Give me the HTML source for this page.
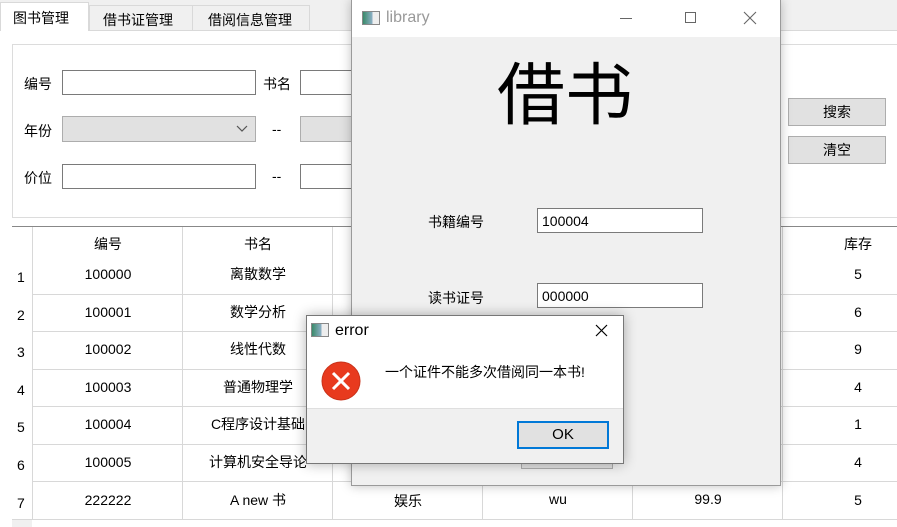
<!DOCTYPE html>
<html><head><meta charset="utf-8"><style>
*{margin:0;padding:0;box-sizing:border-box}
body{width:897px;height:527px;overflow:hidden;background:#fff;font-family:"Liberation Sans","Microsoft YaHei","Noto Sans CJK SC",sans-serif;font-size:14px;color:#000;position:relative}
.a{position:absolute}
.t{white-space:nowrap}
.inp{position:absolute;background:#fff;border:1px solid #7a7a7a}
.btn{position:absolute;background:#e1e1e1;border:1px solid #adadad;text-align:center}
.vl{position:absolute;width:1px;background:#d8d8d8}
.hl{position:absolute;height:1px;background:#d8d8d8}
.c{position:absolute;text-align:center;width:150px;white-space:nowrap}
</style></head><body>
<div class="a" style="left:0;top:0;width:897px;height:31px;background:#f0f0f0"></div>
<div class="a" style="left:0;top:2px;width:89px;height:29px;background:#fff;border:1px solid #d9d9d9;border-bottom:none"></div>
<div class="a t" style="left:13px;top:8px;font-size:14px">图书管理</div>
<div class="a" style="left:89px;top:5px;width:104px;height:26px;background:#f0f0f0;border:1px solid #d9d9d9;border-bottom:none"></div>
<div class="a t" style="left:103px;top:10px">借书证管理</div>
<div class="a" style="left:192px;top:5px;width:118px;height:26px;background:#f0f0f0;border:1px solid #d9d9d9;border-bottom:none"></div>
<div class="a t" style="left:208px;top:10px">借阅信息管理</div>
<div class="a" style="left:89px;top:30px;width:808px;height:1px;background:#d9d9d9"></div>
<div class="a" style="left:12px;top:44px;width:900px;height:174px;border:1px solid #dcdcdc"></div>
<div class="a t" style="left:24px;top:74px">编号</div>
<div class="inp" style="left:62px;top:70px;width:194px;height:25px"></div>
<div class="a t" style="left:263px;top:74px">书名</div>
<div class="inp" style="left:300px;top:70px;width:60px;height:25px"></div>
<div class="a t" style="left:24px;top:121px">年份</div>
<div class="a" style="left:62px;top:116px;width:194px;height:26px;background:#e1e1e1;border:1px solid #adadad"></div>
<svg class="a" style="left:236px;top:125px" width="12" height="8"><path d="M1 1L6 6L11 1" fill="none" stroke="#555" stroke-width="1.2"/></svg>
<div class="a t" style="left:272px;top:121px">--</div>
<div class="a" style="left:300px;top:116px;width:60px;height:26px;background:#e1e1e1;border:1px solid #adadad"></div>
<div class="a t" style="left:24px;top:168px">价位</div>
<div class="inp" style="left:62px;top:164px;width:194px;height:25px"></div>
<div class="a t" style="left:272px;top:168px">--</div>
<div class="inp" style="left:300px;top:164px;width:60px;height:25px"></div>
<div class="btn" style="left:788px;top:98px;width:98px;height:28px;line-height:26px">搜索</div>
<div class="btn" style="left:788px;top:136px;width:98px;height:28px;line-height:26px">清空</div>
<div class="a" style="left:12px;top:226px;width:885px;height:1px;background:#888"></div>
<div class="a" style="left:12px;top:520px;width:20px;height:7px;background:#f0f0f0"></div>
<div class="vl" style="left:32px;top:227px;height:292px"></div>
<div class="vl" style="left:182px;top:227px;height:292px"></div>
<div class="vl" style="left:332px;top:227px;height:292px"></div>
<div class="vl" style="left:482px;top:227px;height:292px"></div>
<div class="vl" style="left:632px;top:227px;height:292px"></div>
<div class="vl" style="left:782px;top:227px;height:292px"></div>
<div class="hl" style="left:33px;top:294px;width:864px"></div>
<div class="hl" style="left:33px;top:331px;width:864px"></div>
<div class="hl" style="left:33px;top:369px;width:864px"></div>
<div class="hl" style="left:33px;top:406px;width:864px"></div>
<div class="hl" style="left:33px;top:444px;width:864px"></div>
<div class="hl" style="left:33px;top:481px;width:864px"></div>
<div class="hl" style="left:12px;top:519px;width:885px"></div>
<div class="c" style="left:33px;top:234px">编号</div>
<div class="c" style="left:183px;top:234px">书名</div>
<div class="c" style="left:783px;top:234px">库存</div>
<div class="a" style="left:17px;top:259px;line-height:37.6px">1<br>2<br>3<br>4<br>5<br>6<br>7</div>
<div class="c" style="left:33px;top:256px;line-height:37.6px">100000<br>100001<br>100002<br>100003<br>100004<br>100005<br>222222</div>
<div class="c" style="left:183px;top:256px;line-height:37.6px">离散数学<br>数学分析<br>线性代数<br>普通物理学<br>C程序设计基础<br>计算机安全导论<br>A new 书</div>
<div class="c" style="left:333px;top:491px">娱乐</div>
<div class="c" style="left:483px;top:491px">wu</div>
<div class="c" style="left:633px;top:491px">99.9</div>
<div class="c" style="left:783px;top:256px;line-height:37.6px">5<br>6<br>9<br>4<br>1<br>4<br>5</div>
<div class="a" style="left:351px;top:0;width:430px;height:486px;background:#f0f0f0;border:1px solid #9a9a9a;box-shadow:0 0 10px rgba(0,0,0,.25)"></div>
<div class="a" style="left:352px;top:0;width:428px;height:37px;background:#fff"></div>
<div class="a" style="left:362px;top:11px;width:18px;height:14px;border:1px solid #888;background:linear-gradient(90deg,#3a8a6a,#8fb0c8 60%,#eee 60%)"></div>
<div class="a t" style="left:386px;top:9px;font-size:16px;color:#999">library</div>
<div class="a" style="left:620px;top:18px;width:12px;height:1px;background:#666"></div>
<div class="a" style="left:685px;top:12px;width:11px;height:11px;border:1px solid #666"></div>
<svg class="a" style="left:743px;top:11px" width="14" height="14"><path d="M1 1L13 13M13 1L1 13" stroke="#666" stroke-width="1.1"/></svg>
<div class="a t" style="left:497px;top:56px;font-size:68px;line-height:80px">借书</div>
<div class="a t" style="left:428px;top:212px">书籍编号</div>
<div class="inp" style="left:537px;top:208px;width:166px;height:25px"></div>
<div class="a t" style="left:542px;top:213px">100004</div>
<div class="a t" style="left:428px;top:288px">读书证号</div>
<div class="inp" style="left:537px;top:283px;width:166px;height:25px"></div>
<div class="a t" style="left:542px;top:288px">000000</div>
<div class="a" style="left:521px;top:440px;width:92px;height:29px;background:#e1e1e1;border:1px solid #adadad"></div>
<div class="a" style="left:306px;top:315px;width:318px;height:149px;background:#fff;border:1px solid #777;box-shadow:0 0 12px rgba(0,0,0,.3)"></div>
<div class="a" style="left:307px;top:408px;width:316px;height:55px;background:#f0f0f0;border-top:1px solid #dfdfdf"></div>
<div class="a" style="left:311px;top:323px;width:18px;height:14px;border:1px solid #888;background:linear-gradient(90deg,#3a8a6a,#8fb0c8 60%,#eee 60%)"></div>
<div class="a t" style="left:335px;top:322px;font-size:16px">error</div>
<svg class="a" style="left:595px;top:324px" width="13" height="13"><path d="M1 1L12 12M12 1L1 12" stroke="#000" stroke-width="1.2"/></svg>
<svg class="a" style="left:321px;top:361px" width="40" height="40"><circle cx="20" cy="20" r="19" fill="#e83a1e" stroke="#c9321a"/><path d="M12 12L28 28M28 12L12 28" stroke="#fff" stroke-width="3"/></svg>
<div class="a t" style="left:385px;top:362px">一个证件不能多次借阅同一本书!</div>
<div class="a" style="left:517px;top:421px;width:92px;height:28px;background:#e1e1e1;border:2px solid #0078d7;text-align:center;line-height:24px;font-size:15px">OK</div>
</body></html>
